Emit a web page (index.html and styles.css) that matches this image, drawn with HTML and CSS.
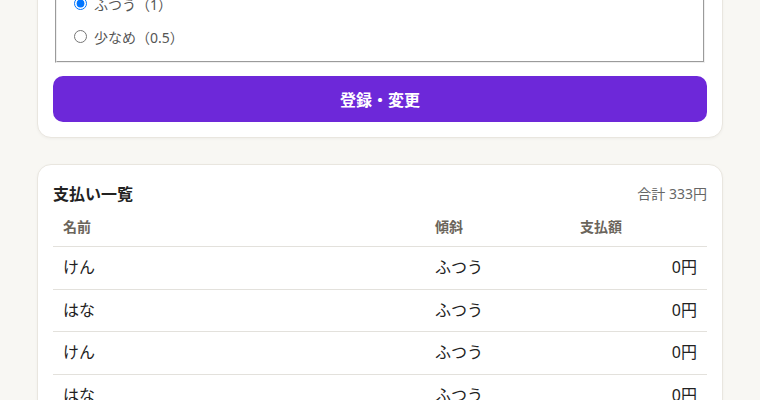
FILE: index.html
```html
<!DOCTYPE html>
<html lang="ja">
<head>
<meta charset="utf-8">
<title>支払い</title>
<link rel="stylesheet" href="styles.css">
</head>
<body>
<main class="page">
  <section class="card">
    <fieldset class="weights">
      <label class="opt"><input type="radio" name="w"><span>多め（1.5）</span></label>
      <label class="opt"><input type="radio" name="w" checked><span>ふつう（1）</span></label>
      <label class="opt"><input type="radio" name="w"><span>少なめ（0.5）</span></label>
    </fieldset>
    <button class="submit" type="button">登録・変更</button>
  </section>

  <section class="card">
    <div class="card-head">
      <h2 class="card-title">支払い一覧</h2>
      <span class="total">合計 333円</span>
    </div>
    <table class="pay">
      <thead>
        <tr><th>名前</th><th class="col-slope">傾斜</th><th class="col-amount">支払額</th></tr>
      </thead>
      <tbody>
        <tr><td>けん</td><td>ふつう</td><td class="amount">0円</td></tr>
        <tr><td>はな</td><td>ふつう</td><td class="amount">0円</td></tr>
        <tr><td>けん</td><td>ふつう</td><td class="amount">0円</td></tr>
        <tr><td>はな</td><td>ふつう</td><td class="amount">0円</td></tr>
        <tr><td>けん</td><td>ふつう</td><td class="amount">0円</td></tr>
      </tbody>
    </table>
  </section>
</main>
</body>
</html>
```

FILE: styles.css
```css
html, body {
  margin: 0;
  padding: 0;
  background: #f8f7f3;
  font-family: "Noto Sans", "Noto Sans CJK JP", sans-serif;
  color: #222;
}

.page {
  max-width: 686px;
  margin: -68px auto 0;
  display: flex;
  flex-direction: column;
  gap: 26px;
}

.card {
  background: #fff;
  border: 1px solid #e9e6df;
  border-radius: 14px;
  padding: 15px;
  box-shadow: 0 1px 3px rgba(0, 0, 0, 0.04);
}

.weights {
  margin: 0 2px;
  padding: 6px 12px 10px;
  display: flex;
  flex-direction: column;
  gap: 4px;
}

.opt {
  display: flex;
  align-items: center;
  height: 29px;
  font-size: 14px;
  color: #555;
}

.opt input {
  margin: 0 7px 0 5px;
  width: 13px;
  height: 13px;
}

.submit {
  display: block;
  width: 100%;
  height: 46px;
  margin-top: 13px;
  border: none;
  border-radius: 10px;
  background: #6d28d9;
  color: #fff;
  font-family: inherit;
  font-size: 16px;
  font-weight: 700;
}

.card-head {
  display: flex;
  justify-content: space-between;
  align-items: center;
  height: 26px;
}

.card-title {
  margin: 0;
  font-size: 16px;
  font-weight: 700;
  color: #222;
}

.total {
  font-size: 14px;
  color: #666;
}

.pay {
  width: 100%;
  margin-top: 2px;
  border-collapse: collapse;
}

.pay th {
  text-align: left;
  font-size: 14px;
  font-weight: 700;
  color: #6b655b;
  padding: 8px 10px;
  line-height: 22px;
  border-bottom: 1px solid #e3e1dc;
}

.pay .col-slope { width: 125px; }
.pay .col-amount { width: 117px; }

.pay td {
  font-size: 16px;
  padding: 10px;
  line-height: 21.5px;
  border-bottom: 1px solid #e3e1dc;
}

.pay td.amount {
  text-align: right;
}
```
